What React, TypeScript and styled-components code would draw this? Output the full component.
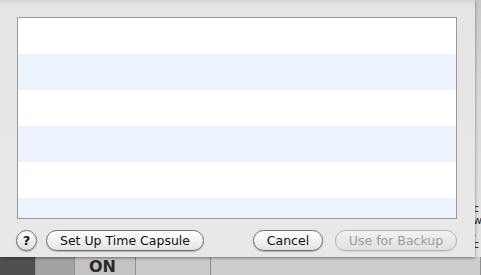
import React from "react";
import styled, { createGlobalStyle } from "styled-components";

const GlobalStyle = createGlobalStyle`
  html, body {
    margin: 0;
    padding: 0;
    background: #cfcfcf;
  }
  body {
    font-family: "DejaVu Sans", "Liberation Sans", sans-serif;
  }
`;

const Screen = styled.div`
  width: 481px;
  height: 275px;
  overflow: hidden;
  display: flex;
  flex-direction: column;
  background: #d2d2d2;
`;

const Upper = styled.div`
  display: flex;
  height: 268px;
`;

const Sheet = styled.div`
  width: 475px;
  box-sizing: border-box;
  padding: 17px 18px 0 17px;
  display: flex;
  flex-direction: column;
  background: linear-gradient(to bottom, #d6d6d6 0px, #e5e5e5 6px, #e8e8e8 100%);
  box-shadow: 0 1px 3px rgba(0, 0, 0, 0.45);
  position: relative;
  z-index: 1;
`;

const RightEdge = styled.div`
  flex: 1;
  background: linear-gradient(to bottom, #c9c9c9, #dadada 40%, #e4e4e4);
  font-size: 11px;
  color: #222;
  overflow: hidden;
  display: flex;
  flex-direction: column;
  justify-content: flex-end;
  padding-bottom: 6px;
  line-height: 12px;
  margin-left: -2px;
`;

const Table = styled.div`
  height: 202px;
  box-sizing: border-box;
  border: 1px solid #9a9a9a;
  background: #fff;
  overflow: hidden;
  display: flex;
  flex-direction: column;
`;

const Row = styled.div<{ $alt: boolean }>`
  height: 36px;
  flex-shrink: 0;
  background: ${(p) => (p.$alt ? "#edf3fe" : "#ffffff")};
`;

const Footer = styled.div`
  display: flex;
  align-items: center;
  margin-top: 11px;
  height: 21px;
`;

const Help = styled.div`
  width: 21px;
  height: 21px;
  box-sizing: border-box;
  border-radius: 50%;
  border: 1px solid #6e6e6e;
  background: linear-gradient(to bottom, #ffffff, #f0f0f0 50%, #dcdcdc);
  box-shadow: 0 1px 1px rgba(0, 0, 0, 0.25);
  display: flex;
  align-items: center;
  justify-content: center;
  font-size: 13px;
  font-weight: bold;
  color: #1a1a1a;
  margin-left: -1px;
`;

const Button = styled.div<{ $w: number; $disabled?: boolean }>`
  width: ${(p) => p.$w}px;
  height: 21px;
  box-sizing: border-box;
  border-radius: 11px;
  border: 1px solid ${(p) => (p.$disabled ? "#b4b4b4" : "#6e6e6e")};
  background: ${(p) =>
    p.$disabled
      ? "linear-gradient(to bottom, #f2f2f2, #e9e9e9 50%, #e2e2e2)"
      : "linear-gradient(to bottom, #ffffff, #f3f3f3 50%, #e2e2e2)"};
  box-shadow: 0 1px 1px rgba(0, 0, 0, ${(p) => (p.$disabled ? 0.08 : 0.22)});
  display: flex;
  align-items: center;
  justify-content: center;
  font-size: 12.5px;
  color: ${(p) => (p.$disabled ? "#9b9b9b" : "#111")};
  white-space: nowrap;
`;

const Spacer = styled.div<{ $w?: number }>`
  ${(p) => (p.$w ? `width: ${p.$w}px;` : "flex: 1;")}
`;

const Lower = styled.div`
  flex: 1;
  display: flex;
`;

const Seg = styled.div<{ $w?: number; $bg: string }>`
  ${(p) => (p.$w ? `width: ${p.$w}px;` : "flex: 1;")}
  background: ${(p) => p.$bg};
  border-right: 1px solid #8f8f8f;
  overflow: hidden;
`;

const OnLabel = styled.span`
  display: block;
  font-size: 16px;
  font-weight: bold;
  color: #2a2a2a;
  line-height: 16px;
  margin-top: 2px;
  margin-left: 14px;
`;

export default function App() {
  const rows = Array.from({ length: 6 }, (_, i) => i % 2 === 1);
  return (
    <>
      <GlobalStyle />
      <Screen>
        <Upper>
          <Sheet>
            <Table>
              {rows.map((alt, i) => (
                <Row key={i} $alt={alt} />
              ))}
            </Table>
            <Footer>
              <Help>?</Help>
              <Spacer $w={9} />
              <Button $w={158}>Set Up Time Capsule</Button>
              <Spacer />
              <Button $w={70}>Cancel</Button>
              <Spacer $w={12} />
              <Button $w={122} $disabled>
                Use for Backup
              </Button>
            </Footer>
          </Sheet>
          <RightEdge>
            <span>c</span>
            <span>w</span>
            <span>.</span>
            <span>c</span>
          </RightEdge>
        </Upper>
        <Lower>
          <Seg $w={35} $bg="#4f4f4f" />
          <Seg $w={38} $bg="#a3a3a3" />
          <Seg $w={60} $bg="#c4c4c4">
            <OnLabel>ON</OnLabel>
          </Seg>
          <Seg $w={74} $bg="#cacaca" />
          <Seg $bg="#cdcdcd" />
        </Lower>
      </Screen>
    </>
  );
}
